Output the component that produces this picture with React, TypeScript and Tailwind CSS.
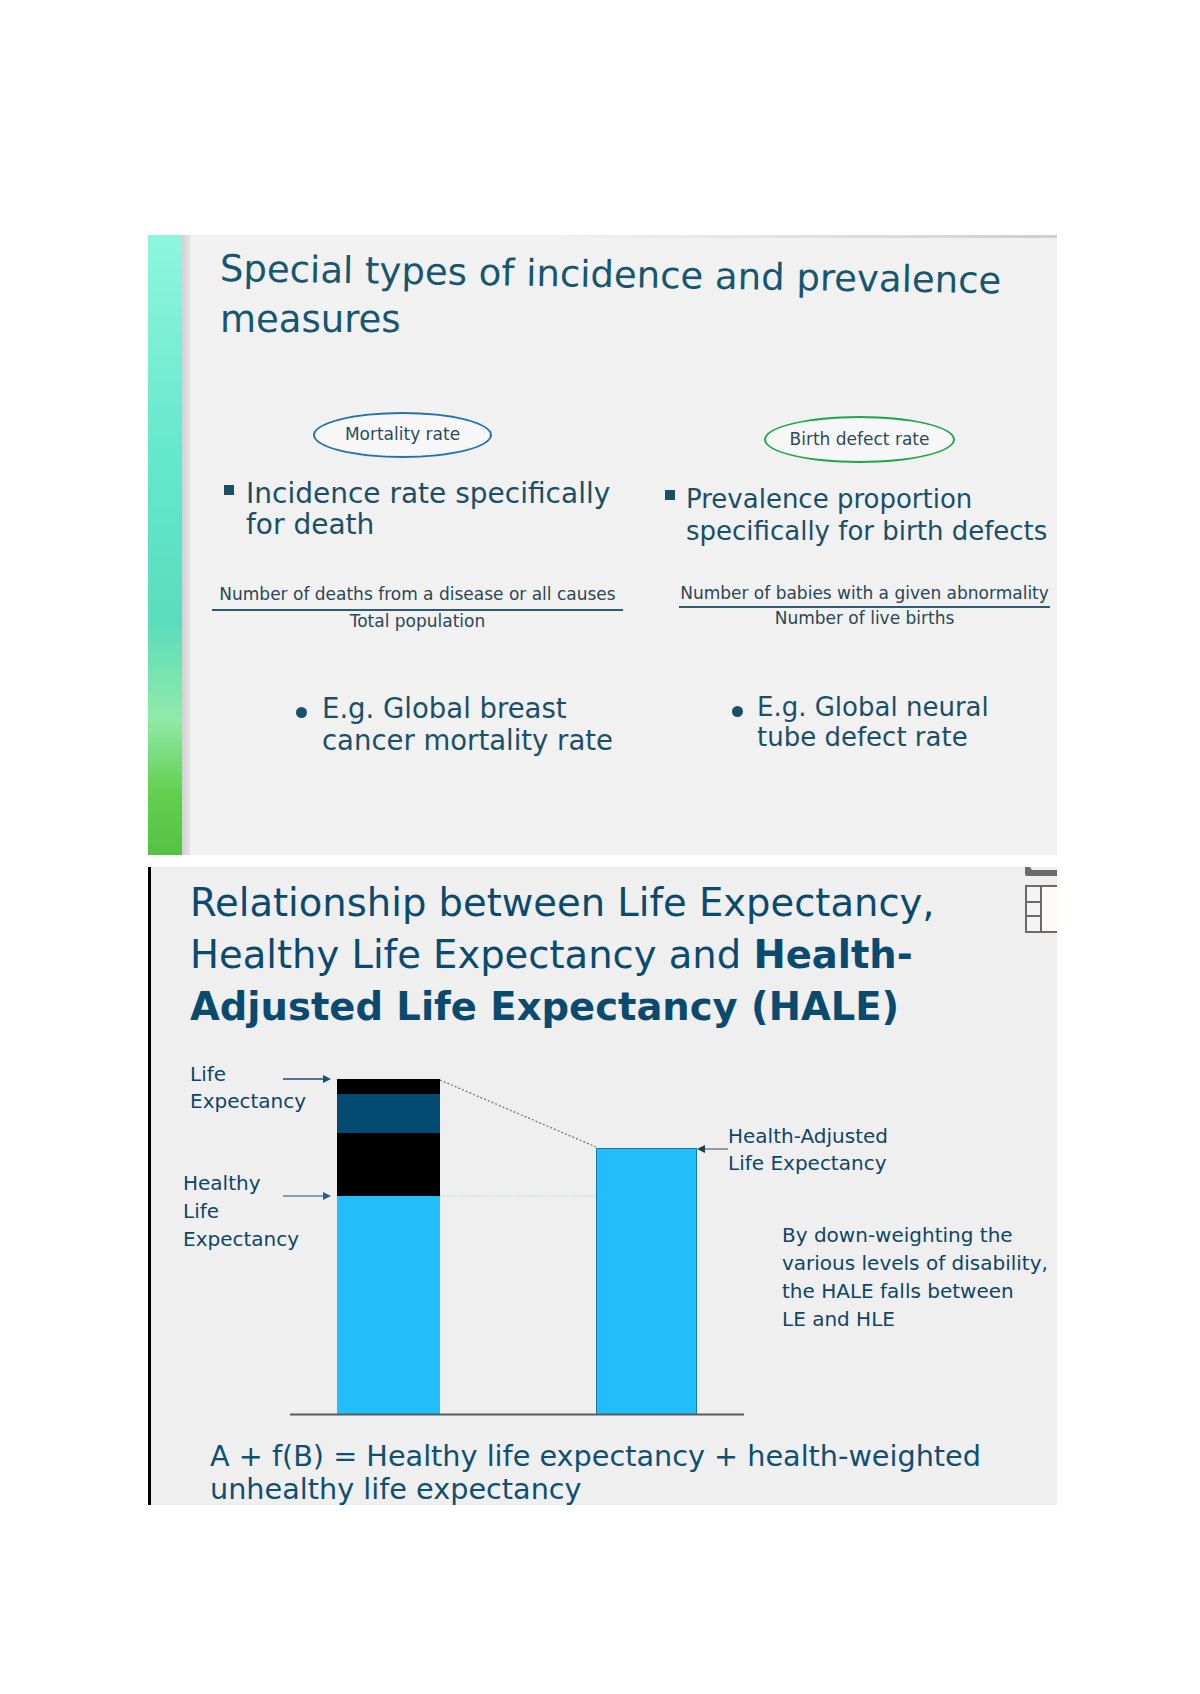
export default function App() {
  return (
    <div className="min-h-[1694px] w-[1200px] bg-white pt-[235px] font-['DejaVu_Sans',sans-serif]">
      <IncidenceSlide />
      <HaleSlide />
    </div>
  );
}

function IncidenceSlide() {
  return (
    <div className="relative ml-[148px] flex h-[620px] w-[909px] overflow-hidden bg-[#f1f1f1]">
      <div className="w-[34px] shrink-0 bg-[linear-gradient(to_bottom,#8ff6de_0%,#66e8cb_35%,#5adcbd_62%,#90eaa8_78%,#62cf4f_90%,#55c243_100%)]" />
      <div className="w-[8px] shrink-0 bg-[linear-gradient(to_right,#d2d2d2,#e4e4e4)]" />
      <div className="absolute right-0 top-0 h-[3px] w-[500px] bg-[linear-gradient(to_right,transparent,#cfcfcf)]" />
      <div className="flex flex-1 flex-col">
        <h1 className="pl-[30px] pt-[11px] text-[37px] leading-[45px] text-[#17566f]">
          <span className="block origin-left rotate-[0.9deg] whitespace-nowrap">
            Special types of incidence and prevalence
          </span>
          <span className="mt-[6px] block">measures</span>
        </h1>

        <div className="mt-[-2px] grid grid-cols-[470px_1fr] text-[#1b4f68]">
          {/* mortality */}
          <div className="flex flex-col">
            <div className="ml-[123px] mt-[72px] flex h-[46px] w-[179px] items-center justify-center rounded-[50%] border-2 border-[#2471ad] bg-[#f7f7f7] text-[17px] text-[#2d4a58]">
              Mortality rate
            </div>
            <div className="ml-[34px] mt-[20px] flex">
              <span className="mt-[7px] h-[10px] w-[10px] shrink-0 bg-[#1b4f68]" />
              <p className="ml-[12px] text-[28px] leading-[31px]">
                Incidence rate specifically
                <br />
                for death
              </p>
            </div>
            <Fraction
              className="ml-[22px] mt-[44px] w-[411px]"
              top="Number of deaths from a disease or all causes"
              bottom="Total population"
              gap="mt-[5px]"
            />
            <div className="ml-[106px] mt-[61px] flex">
              <span className="mt-[15px] h-[11px] w-[11px] shrink-0 rounded-full bg-[#1b4f68]" />
              <p className="ml-[15px] whitespace-nowrap text-[27.5px] leading-[32px]">
                E.g. Global breast
                <br />
                cancer mortality rate
              </p>
            </div>
          </div>

          {/* birth defects */}
          <div className="flex flex-col">
            <div className="ml-[104px] mt-[76px] flex h-[47px] w-[191px] items-center justify-center rounded-[50%] border-2 border-[#1fa64a] bg-[#f7f7f7] text-[17px] text-[#2d4a58]">
              Birth defect rate
            </div>
            <div className="ml-[5px] mt-[20px] flex">
              <span className="mt-[7px] h-[10px] w-[10px] shrink-0 bg-[#1b4f68]" />
              <p className="ml-[11px] whitespace-nowrap text-[26px] leading-[32px]">
                Prevalence proportion
                <br />
                specifically for birth defects
              </p>
            </div>
            <Fraction
              className="ml-[19px] mt-[36px] w-[371px]"
              top="Number of babies with a given abnormality"
              bottom="Number of live births"
              gap="mt-[3px]"
            />
            <div className="ml-[72px] mt-[64px] flex">
              <span className="mt-[14px] h-[11px] w-[11px] shrink-0 rounded-full bg-[#1b4f68]" />
              <p className="ml-[14px] text-[26px] leading-[30px]">
                E.g. Global neural
                <br />
                tube defect rate
              </p>
            </div>
          </div>
        </div>
      </div>
    </div>
  );
}

function Fraction({
  className,
  top,
  bottom,
  gap,
}: {
  className: string;
  top: string;
  bottom: string;
  gap: string;
}) {
  return (
    <div className={`flex flex-col text-center text-[17px] leading-[20px] text-[#2b4654] ${className}`}>
      <span className="whitespace-nowrap">{top}</span>
      <div className={`h-[2px] bg-[#2f5b70] ${gap}`} />
      <span className="whitespace-nowrap">{bottom}</span>
    </div>
  );
}

function HaleSlide() {
  return (
    <div className="relative ml-[148px] mt-[12px] h-[638px] w-[909px] overflow-hidden border-l-[3px] border-black bg-[#efefef]">
      <SlideIcon />
      <h2 className="whitespace-nowrap pl-[39px] pt-[10px] text-[38.5px] leading-[52px] text-[#0b4a6f]">
        Relationship between Life Expectancy,
        <br />
        Healthy Life Expectancy and <b>Health-</b>
        <br />
        <b>Adjusted Life Expectancy (HALE)</b>
      </h2>

      <div className="relative mt-[7px] h-[390px] text-[20px] text-[#0f4567]">
        <svg className="absolute inset-0" width="906" height="390" viewBox="0 0 906 390">
          <rect x="186" y="39" width="103" height="15" fill="#000" />
          <rect x="186" y="54" width="103" height="39" fill="#034b70" />
          <rect x="186" y="93" width="103" height="63" fill="#000" />
          <rect x="186" y="156" width="103" height="218" fill="#22bdfb" />
          <rect x="445.5" y="108.5" width="100" height="266" fill="#22bdfb" stroke="#1a78a8" strokeWidth="1" />
          <line x1="289" y1="40" x2="445" y2="107" stroke="#767676" strokeWidth="1.3" strokeDasharray="2 2" />
          <line x1="289" y1="156" x2="445" y2="156" stroke="#cfdde6" strokeWidth="1.6" strokeDasharray="2 1.5" />
          <line x1="139" y1="374.5" x2="593" y2="374.5" stroke="#5a5a5a" strokeWidth="2" />
          <line x1="132" y1="39" x2="174" y2="39" stroke="#1f4e6e" strokeWidth="1.5" />
          <polygon points="172,35 180,39 172,43" fill="#1f4e6e" />
          <line x1="132" y1="156" x2="174" y2="156" stroke="#5b88a8" strokeWidth="1.5" />
          <polygon points="172,152 180,156 172,160" fill="#2d5d80" />
          <line x1="577" y1="109" x2="552" y2="109" stroke="#6a6a6a" strokeWidth="1.3" />
          <polygon points="554,105 546,109 554,113" fill="#1f3e50" />
        </svg>

        <p className="absolute left-[39px] top-[21px] leading-[27px]">
          Life
          <br />
          Expectancy
        </p>
        <p className="absolute left-[32px] top-[129px] leading-[28px]">
          Healthy
          <br />
          Life
          <br />
          Expectancy
        </p>
        <p className="absolute left-[577px] top-[83px] whitespace-nowrap leading-[27px]">
          Health-Adjusted
          <br />
          Life Expectancy
        </p>
        <p className="absolute left-[631px] top-[181px] whitespace-nowrap leading-[28px]">
          By down-weighting the
          <br />
          various levels of disability,
          <br />
          the HALE falls between
          <br />
          LE and HLE
        </p>
      </div>

      <p className="mt-[10px] whitespace-nowrap pl-[59px] text-[28.7px] leading-[33px] text-[#0f4f72]">
        A + f(B) = Healthy life expectancy + health-weighted
        <br />
        unhealthy life expectancy
      </p>
    </div>
  );
}

function SlideIcon() {
  return (
    <svg className="absolute right-0 top-0" width="32" height="66" viewBox="0 0 32 66">
      <path d="M0 0 H5 L7 3 H32 V9 H2 Q0 9 0 7 Z" fill="#6b6b6b" />
      <rect x="1" y="19" width="40" height="46" fill="#fffaf6" stroke="#6b6b6b" strokeWidth="2" />
      <rect x="1" y="19" width="15" height="46" fill="#f4f4f4" stroke="#6b6b6b" strokeWidth="2" />
      <line x1="1" y1="35" x2="16" y2="35" stroke="#6b6b6b" strokeWidth="2" />
      <line x1="1" y1="49" x2="16" y2="49" stroke="#6b6b6b" strokeWidth="2" />
    </svg>
  );
}
